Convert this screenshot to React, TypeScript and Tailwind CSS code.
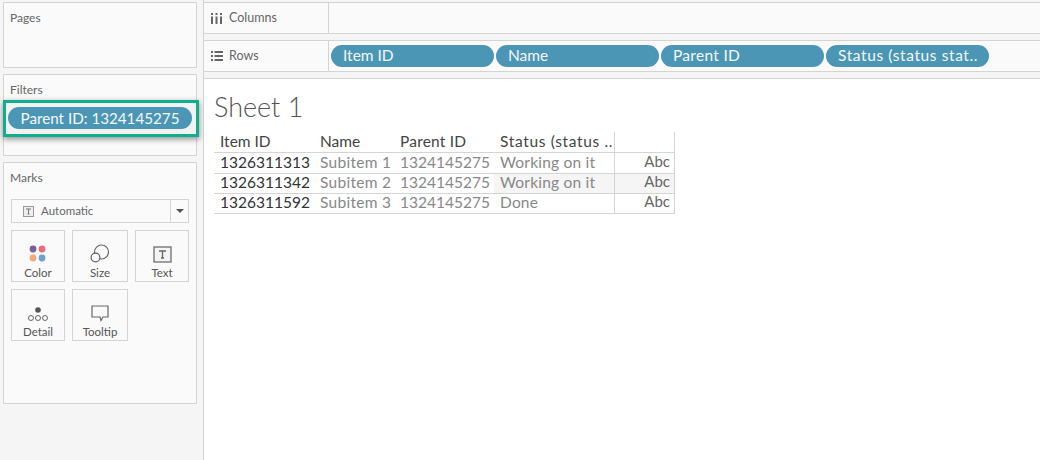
const font = "font-['Lato','Liberation_Sans',sans-serif]";

function Pill({ label, tracking = "" }: { label: string; tracking?: string }) {
  return (
    <div className={`flex h-[22px] w-[163px] items-center rounded-full bg-[#4c96b5] pl-3 text-[15.5px] text-[#f4f8fa] ${tracking}`}>
      {label}
    </div>
  );
}

function MarkCard({ label, icon, width }: { label: string; icon: React.ReactNode; width: string }) {
  return (
    <div className={`flex h-[52px] flex-col items-center border border-[#d4d4d4] bg-[#fafafa] ${width}`}>
      <div className="flex h-[32px] items-end justify-center">{icon}</div>
      <div className="mt-[3px] text-[11.5px] leading-[13px] text-[#555]">{label}</div>
    </div>
  );
}

const rows = [
  ["1326311313", "Subitem 1", "1324145275", "Working on it"],
  ["1326311342", "Subitem 2", "1324145275", "Working on it"],
  ["1326311592", "Subitem 3", "1324145275", "Done"],
];

export default function App() {
  return (
    <div className={`flex h-[460px] w-[1040px] overflow-hidden bg-white ${font}`}>
      {/* left rail */}
      <div className="flex h-full w-[204px] shrink-0 flex-col border-r border-[#d4d4d4] bg-[#f5f5f5] pl-[3px] pr-[6px] pt-[2px]">
        <div className="h-[66px] border border-[#d4d4d4] bg-[#fafafa] pl-[6px] pt-[8px] text-[12px] leading-[14px] text-[#666]">Pages</div>
        <div className="mt-[6px] h-[82px] border border-[#d4d4d4] bg-[#fafafa] pt-[8px] text-[12px] leading-[14px] text-[#666]">
          <div className="pl-[6px]">Filters</div>
          <div className="-ml-[1px] -mr-[3px] mt-[3px] h-[37px] border-[3px] border-[#0fae8c] bg-[#f2f2f2] px-[2px] pt-[4px] shadow-[0_2px_6px_rgba(0,0,0,0.45)]">
            <div className="flex h-[22px] w-[184px] items-center justify-center rounded-full bg-[#4c96b5] text-[15.2px] text-[#f4f8fa]">Parent ID: 1324145275</div>
          </div>
        </div>
        <div className="mt-[6px] h-[242px] border border-[#d4d4d4] bg-[#fafafa] px-[7px] pt-[8px]">
          <div className="-ml-px text-[12px] leading-[14px] text-[#666]">Marks</div>
          <div className="mt-[14px] flex h-[24px] w-[178px] items-center border border-[#d4d4d4] bg-[#fafafa]">
            <div className="flex flex-1 items-center pl-[11px] text-[11.5px] text-[#666]">
              <svg width="11" height="11" viewBox="0 0 11 11" className="mr-[7px]">
                <rect x="0.5" y="0.5" width="10" height="10" fill="#eee" stroke="#999" />
                <path d="M3 3h5M5.500 3v5M4.500 8h2" stroke="#777" fill="none" />
              </svg>
              Automatic
            </div>
            <div className="flex h-full w-[18px] items-center justify-center border-l border-[#d4d4d4]">
              <div className="h-0 w-0 border-x-[4px] border-t-[4px] border-x-transparent border-t-[#555]" />
            </div>
          </div>
          <div className="mt-[7px] flex gap-[7px]">
            <MarkCard
              label="Color"
              width="w-[54px]"
              icon={
                <svg width="18" height="18" viewBox="0 0 18 18">
                  <circle cx="4" cy="4" r="3.400" fill="#7b5f9b" />
                  <circle cx="13" cy="4" r="3.400" fill="#ee6a7a" />
                  <circle cx="4" cy="13" r="3.400" fill="#f3a77c" />
                  <circle cx="13" cy="13" r="3.400" fill="#6f9fcf" />
                </svg>
              }
            />
            <MarkCard
              label="Size"
              width="w-[56px]"
              icon={
                <svg width="20" height="19" viewBox="0 0 20 19" fill="#fafafa" stroke="#666" strokeWidth="1.200">
                  <circle cx="11.500" cy="8" r="7" />
                  <circle cx="5.500" cy="13.500" r="4.400" />
                </svg>
              }
            />
            <MarkCard
              label="Text"
              width="w-[54px]"
              icon={
                <svg width="19" height="17" viewBox="0 0 19 17">
                  <rect x="1" y="1" width="17" height="15" fill="#f4f4f4" stroke="#777" strokeWidth="1.400" />
                  <path d="M6 5h7M9.500 5v7M8 12h3" stroke="#666" strokeWidth="1.300" fill="none" />
                </svg>
              }
            />
          </div>
          <div className="mt-[7px] flex gap-[7px]">
            <MarkCard
              label="Detail"
              width="w-[54px]"
              icon={
                <svg width="20" height="15" viewBox="0 0 20 15">
                  <circle cx="10" cy="3" r="2.800" fill="#555" />
                  <g fill="none" stroke="#666">
                    <circle cx="3" cy="11" r="2.500" />
                    <circle cx="10" cy="11" r="2.500" />
                    <circle cx="17" cy="11" r="2.500" />
                  </g>
                </svg>
              }
            />
            <MarkCard
              label="Tooltip"
              width="w-[56px]"
              icon={
                <svg width="18" height="17" viewBox="0 0 18 17">
                  <path d="M1 1h16v11h-5l-2 3.500-1-3.500H1z" fill="#fafafa" stroke="#666" strokeWidth="1.200" />
                </svg>
              }
            />
          </div>
        </div>
      </div>

      {/* main */}
      <div className="flex h-full min-w-0 flex-1 flex-col bg-[#f5f5f5] pt-[2px]">
        <div className="flex h-[32px] items-stretch border-y border-[#d4d4d4] bg-[#fafafa]">
          <div className="flex w-[125px] items-center border-r border-[#d4d4d4] pl-[7px] text-[12.500px] text-[#666]">
            <svg width="11" height="11" viewBox="0 0 11 11" className="mr-[7px]" fill="#666">
              <rect x="0" y="0" width="2" height="2" />
              <rect x="4.500" y="0" width="2" height="2" />
              <rect x="9" y="0" width="2" height="2" />
              <rect x="0" y="3.500" width="2" height="7.500" />
              <rect x="4.500" y="3.500" width="2" height="7.500" />
              <rect x="9" y="3.500" width="2" height="7.500" />
            </svg>
            Columns
          </div>
        </div>
        <div className="mt-[6px] flex h-[32px] items-stretch border-y border-[#d4d4d4] bg-[#fafafa]">
          <div className="flex w-[125px] items-center border-r border-[#d4d4d4] pl-[7px] text-[12.500px] text-[#666]">
            <svg width="12" height="10" viewBox="0 0 12 10" className="mr-[6px]" fill="#666">
              <rect x="0" y="0" width="2" height="2" />
              <rect x="3.500" y="0" width="8.500" height="2" />
              <rect x="0" y="4" width="2" height="2" />
              <rect x="3.500" y="4" width="8.500" height="2" />
              <rect x="0" y="8" width="2" height="2" />
              <rect x="3.500" y="8" width="8.500" height="2" />
            </svg>
            Rows
          </div>
          <div className="ml-px flex items-center gap-[2px] pl-px">
            <Pill label="Item ID" />
            <Pill label="Name" />
            <Pill label="Parent ID" tracking="tracking-[0.3px]" />
            <Pill label="Status (status stat.." tracking="tracking-[0.6px]" />
          </div>
        </div>
        <div className="mt-[6px] flex-1 border-t border-[#d4d4d4] bg-white pl-[10px] pt-[12px]">
          <div className="text-[27px] font-light leading-[32px] text-[#555]">Sheet 1</div>
          <div className="mt-[9px] w-[461px] border-b border-[#d4d4d4] text-[15.500px]">
            <div className="grid h-[21px] grid-cols-[106px_80px_100px_115px_60px] items-start border-b border-[#d4d4d4] leading-[18px] text-[#444]">
              <div className="pl-[6px]">Item ID</div>
              <div>Name</div>
              <div className="tracking-[0.2px]">Parent ID</div>
              <div className="h-full border-r border-[#d4d4d4] tracking-[0.65px]">Status (status ..</div>
              <div className="h-full border-r border-[#d4d4d4]" />
            </div>
            {rows.map((r, i) => (
              <div
                key={r[0]}
                className={`grid h-[20px] grid-cols-[106px_80px_100px_115px_60px] items-start text-[#888] ${i > 0 ? "border-t border-[#d4d4d4] leading-[16px]" : "leading-[18px]"}`}
              >
                <div className="pl-[6px] text-[#333]">{r[0]}</div>
                <div className="tracking-[0.3px]">{r[1]}</div>
                <div>{r[2]}</div>
                <div className={`-ml-[6px] h-full border-r border-[#d4d4d4] pl-[6px] tracking-[0.2px] ${i === 1 ? "bg-[#f5f5f5]" : ""}`}>{r[3]}</div>
                <div className={`h-full border-r border-[#d4d4d4] pr-[4px] text-right text-[15px] text-[#666] ${i === 1 ? "bg-[#f5f5f5] leading-[14px]" : i === 2 ? "leading-[14px]" : "leading-[16px]"}`}>Abc</div>
              </div>
            ))}
          </div>
        </div>
      </div>
    </div>
  );
}
